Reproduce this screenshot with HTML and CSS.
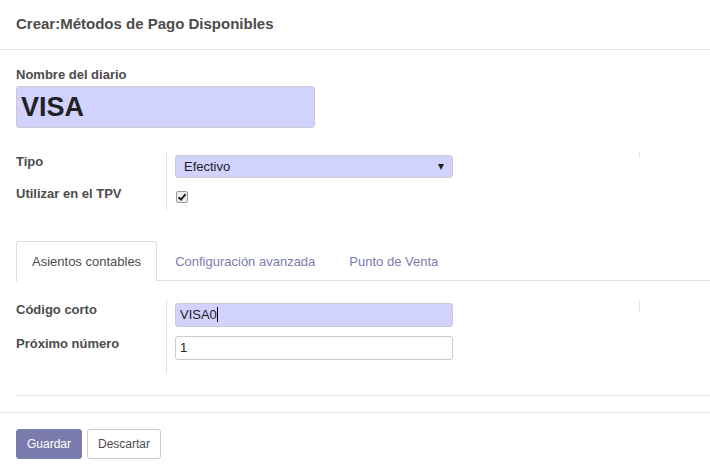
FILE: index.html
```html
<!DOCTYPE html>
<html lang="es">
<head>
<meta charset="utf-8">
<link rel="stylesheet" href="styles.css">
</head>
<body>
<div class="modal">
  <div class="header"><h4 class="title">Crear:Métodos de Pago Disponibles</h4></div>
  <div class="body">
    <div class="name-label">Nombre del diario</div>
    <div class="name-input">VISA</div>

    <div class="group-wrap g1">
      <div class="group">
        <div class="lbl r1">Tipo</div>
        <div class="fld r1">
          <div class="select">Efectivo<span class="arrow"></span></div>
        </div>
        <div class="lbl r2">Utilizar en el TPV</div>
        <div class="fld r2">
          <span class="check"><svg width="10" height="10" viewBox="0 0 10 10"><path d="M1.5 5.2 L4 7.6 L8.6 2.2" fill="none" stroke="#222" stroke-width="2"/></svg></span>
        </div>
      </div>
      <div class="group-right gr1"></div>
    </div>

    <div class="tabs">
      <div class="tab active">Asientos contables</div>
      <div class="tab">Configuración avanzada</div>
      <div class="tab">Punto de Venta</div>
    </div>

    <div class="group-wrap g2">
      <div class="group">
        <div class="lbl r3">Código corto</div>
        <div class="fld r3">
          <div class="input hl">VISA0<span class="caret"></span></div>
        </div>
        <div class="lbl r4">Próximo número</div>
        <div class="fld r4">
          <div class="input plain">1</div>
        </div>
      </div>
      <div class="group-right gr2"></div>
    </div>

    <div class="sheet-end"></div>
  </div>
  <div class="footer">
    <button class="btn primary">Guardar</button>
    <button class="btn secondary">Descartar</button>
  </div>
</div>
</body>
</html>
```
FILE: styles.css
```css
* { box-sizing: border-box; }
html, body { margin: 0; padding: 0; background: #fff; }
body {
  font-family: "Liberation Sans", Arial, sans-serif;
  font-size: 13px;
  color: #4c4c4c;
  width: 710px;
  height: 470px;
  overflow: hidden;
}
.header {
  height: 50px;
  border-bottom: 1px solid #e5e5e5;
  padding: 0 16px;
  display: flex;
  align-items: center;
}
.title {
  margin: 0;
  font-size: 15px;
  font-weight: bold;
  color: #4c4c4c;
  line-height: 18px;
  padding-bottom: 2px;
}
.body {
  padding: 17px 0 16px 16px;
}
.name-label {
  font-weight: bold;
  line-height: 16px;
  margin-bottom: 3px;
}
.name-input {
  width: 299px;
  height: 42px;
  background: #d2d2ff;
  border: 1px solid #ccc;
  border-radius: 3px;
  font-size: 27px;
  font-weight: bold;
  color: #222;
  line-height: 40px;
  padding-left: 4px;
}
.group-wrap { display: flex; }
.g1 { margin-top: 24px; }
.g2 { margin-top: 19px; }
.group {
  width: 623px;
  display: grid;
  grid-template-columns: 150px 1fr;
}
.group-right {
  border-left: 1px solid #e5e5e5;
}
.gr1 { height: 6px; }
.gr2 { height: 12px; margin-top: 1px; }
.lbl {
  font-weight: bold;
  line-height: 18px;
  padding-top: 1px;
}
.fld {
  border-left: 1px solid #e5e5e5;
  padding-left: 8px;
}
.r1 { height: 32px; }
.r2 { height: 26px; }
.r3 { height: 34px; }
.r4 { height: 40px; }
.fld.r1 { padding-top: 3px; }
.fld.r2 { padding-top: 7px; }
.fld.r3 { padding-top: 3px; }
.fld.r4 { padding-top: 2px; }
.select {
  position: relative;
  width: 278px;
  height: 23px;
  background: #d2d2ff;
  border: 1px solid #ccc;
  border-radius: 3px;
  color: #222;
  line-height: 21px;
  padding-left: 8px;
}
.arrow {
  position: absolute;
  right: 8px;
  top: 8px;
  width: 0;
  height: 0;
  border-left: 3.5px solid transparent;
  border-right: 3.5px solid transparent;
  border-top: 6px solid #222;
}
.check {
  display: block;
  width: 12px;
  height: 12px;
  margin-left: 1px;
  border: 1px solid #9a9a9a;
  border-radius: 2px;
  background: #eee;
}
.check svg { display: block; }
.tabs {
  margin-top: 31px;
  display: flex;
  border-bottom: 1px solid #ddd;
  height: 40px;
}
.tab {
  height: 40px;
  padding: 11px 15px 0 15px;
  line-height: 18px;
  color: #7c7bad;
  margin-right: 2px;
  border: 1px solid transparent;
  border-radius: 3px 3px 0 0;
}
.tab.active {
  color: #4c4c4c;
  border-color: #ddd #ddd #fff #ddd;
  background: #fff;
  height: 41px;
}
.input {
  width: 278px;
  height: 24px;
  border: 1px solid #ccc;
  border-radius: 3px;
  color: #222;
  line-height: 22px;
  padding-left: 4px;
}
.input.hl { background: #d2d2ff; }
.input.plain { background: #fff; }
.caret {
  display: inline-block;
  width: 1px;
  height: 15px;
  background: #000;
  vertical-align: -3px;
}
.sheet-end {
  margin-top: 21px;
  border-top: 1px solid #e5e5e5;
}
.footer {
  border-top: 1px solid #e5e5e5;
  padding: 16px 16px;
  display: flex;
  gap: 5px;
}
.btn {
  height: 30px;
  font-family: "Liberation Sans", Arial, sans-serif;
  font-size: 12px;
  border-radius: 3px;
  padding: 0;
  cursor: pointer;
}
.btn.primary {
  background: #7c7bad;
  border: 1px solid #7c7bad;
  color: #fff;
  width: 66px;
}
.btn.secondary {
  background: #fff;
  border: 1px solid #ccc;
  color: #4c4c4c;
  width: 74px;
}
```
